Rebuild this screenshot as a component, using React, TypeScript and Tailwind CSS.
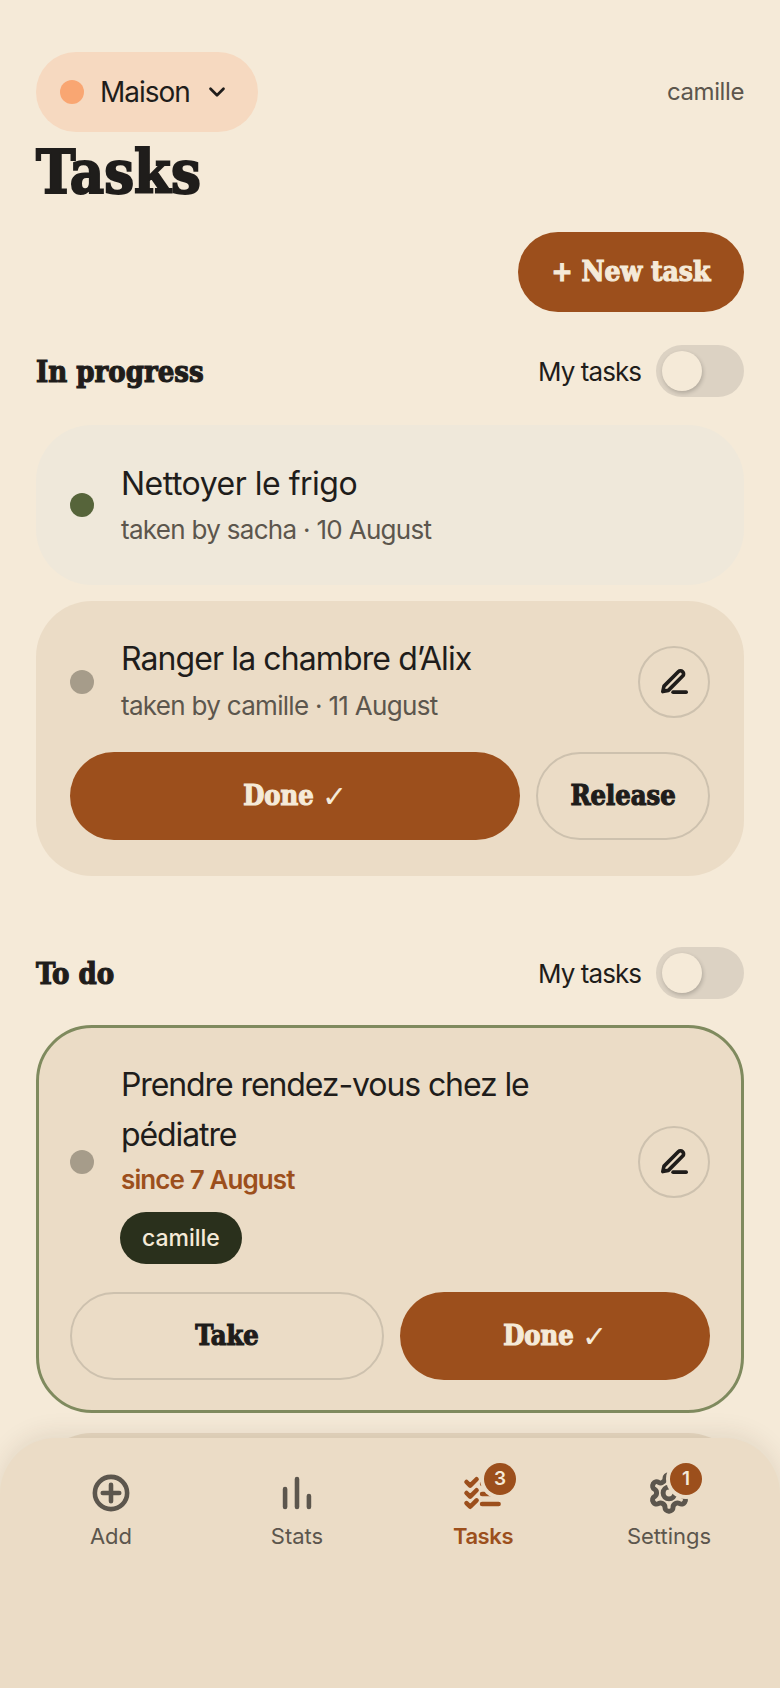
import { ChevronDown } from "lucide-react"

const sans = "font-['Inter','Noto_Sans',sans-serif]"
const serifBase = "font-['DejaVu_Serif','Liberation_Serif',serif] font-bold [font-stretch:condensed]"
const serif = `${serifBase} [-webkit-text-stroke:1.1px_currentColor]`
const serifTitle = `${serifBase} [-webkit-text-stroke:1.9px_currentColor]`

function Toggle() {
  return (
    <div className="flex items-center gap-[15px]">
      <span className="text-[26px] tracking-[-0.95px] text-[#1f1d1b]">My tasks</span>
      <div className="flex h-[52px] w-[88px] items-center rounded-full bg-[#dcd2c3] pl-[6px]">
        <div className="h-[40px] w-[40px] rounded-full bg-[#f5ead8] shadow-[1px_2px_4px_rgba(0,0,0,0.2)]" />
      </div>
    </div>
  )
}

function EditButton() {
  return (
    <div className="flex h-[72px] w-[72px] shrink-0 items-center justify-center rounded-full border-2 border-[#cdc1ae]">
      <svg width="35" height="35" viewBox="0 0 24 24" fill="none" stroke="#1f1d1b" strokeWidth="2.5" strokeLinecap="round" strokeLinejoin="round">
        <path d="M4 18.2l.8-3.7 9.8-9.9a2.1 2.1 0 0 1 3 3l-9.8 9.8z" />
        <path d="M11 18.6h9" />
      </svg>
    </div>
  )
}

function Badge({ n }: { n: number }) {
  return (
    <span className="absolute left-[23px] top-[-8px] flex h-8 w-8 items-center justify-center rounded-full bg-[#9c4f1c] text-[19px] font-semibold text-[#f5ead8] shadow-[0_0_0_4px_#ebdcc6]">
      {n}
    </span>
  )
}

export default function App() {
  return (
    <div className={`${sans} relative h-[1688px] w-[780px] overflow-hidden bg-[#f5ead8]`}>
      <div className="px-9 pt-[52px]">
        <div className="flex items-center justify-between">
          <div className="flex h-[80px] w-[222px] items-center rounded-full bg-[#f6d9c0] pl-6">
            <span className="h-6 w-6 rounded-full bg-[#f9a672]" />
            <span className="ml-4 text-[28px] tracking-[-1px] text-[#1f1d1b]">Maison</span>
            <ChevronDown className="ml-[14px]" size={26} color="#1f1d1b" strokeWidth={2.5} />
          </div>
          <span className="text-[24px] tracking-[-0.4px] text-[#5c564d]">camille</span>
        </div>

        <h1 className={`${serifTitle} mt-[9px] text-[59px] leading-[64px] text-[#1f1d1b]`}>Tasks</h1>

        <div className="mt-[27px] flex justify-end">
          <div className={`${serif} flex h-[80px] w-[226px] items-center justify-center rounded-full bg-[#9c4f1c] text-[28px] text-[#f5ead8]`}>
            + New task
          </div>
        </div>

        <div className="mt-[33px] flex h-[52px] items-center justify-between">
          <h2 className={`${serif} pt-[3px] text-[29px] text-[#1f1d1b]`}>In progress</h2>
          <Toggle />
        </div>

        <div className="mt-7 flex flex-col gap-4">
          <div className="flex h-[160px] items-center rounded-[56px] bg-[#efe8da] px-[34px]">
            <span className="h-6 w-6 shrink-0 rounded-full bg-[#56643a]" />
            <div className="ml-[27px]">
              <div className="text-[32px] leading-[50px] tracking-[-0.5px] text-[#1f1d1b]">Nettoyer le frigo</div>
              <div className="text-[26px] leading-[42px] tracking-[-0.7px] text-[#5c564d]">taken by sacha · 10 August</div>
            </div>
          </div>

          <div className="rounded-[56px] bg-[#ebdcc6] px-[34px] pb-[36px] pt-[33px]">
            <div className="flex items-center">
              <span className="h-6 w-6 shrink-0 rounded-full bg-[#a69c8a]" />
              <div className="ml-[27px] flex-1">
                <div className="text-[32px] leading-[50px] tracking-[-0.9px] text-[#1f1d1b]">Ranger la chambre d’Alix</div>
                <div className="pb-[3px] pt-[1px] text-[26px] leading-[42px] tracking-[-0.7px] text-[#5c564d]">taken by camille · 11 August</div>
              </div>
              <EditButton />
            </div>
            <div className="mt-[22px] flex gap-4">
              <div className={`${serif} flex h-[88px] flex-1 items-center justify-center gap-2 rounded-full bg-[#9c4f1c] text-[27px] text-[#f5ead8]`}>
                Done <span className="text-[30px] font-normal [-webkit-text-stroke:0]">✓</span>
              </div>
              <div className={`${serif} flex h-[88px] w-[174px] items-center justify-center rounded-full border-2 border-[#cdc1ae] text-[27px] text-[#1f1d1b]`}>Release</div>
            </div>
          </div>
        </div>

        <div className="mt-[71px] flex h-[52px] items-center justify-between">
          <h2 className={`${serif} pt-[3px] text-[29px] text-[#1f1d1b]`}>To do</h2>
          <Toggle />
        </div>

        <div className="mt-[26px] rounded-[56px] border-[3px] border-[#7f8a5e] bg-[#ebdcc6] px-[31px] pb-[30px] pt-[32px]">
          <div className="flex items-center">
            <span className="h-6 w-6 shrink-0 rounded-full bg-[#a69c8a]" />
            <div className="ml-[27px] flex-1">
              <div className="text-[32px] leading-[50px] tracking-[-1.1px] text-[#1f1d1b]">Prendre rendez-vous chez le pédiatre</div>
              <div className="mt-[2px] text-[26px] font-semibold leading-[36px] tracking-[-0.9px] text-[#9c4f1c]">since 7 August</div>
              <div className="ml-[-1px] mt-[14px] inline-flex h-[52px] items-center rounded-full bg-[#2a301c] px-[22px] text-[23px] font-medium text-[#f5ead8]">camille</div>
            </div>
            <EditButton />
          </div>
          <div className="mt-[28px] flex gap-4">
            <div className={`${serif} flex h-[88px] min-w-0 flex-1 basis-0 items-center justify-center rounded-full border-2 border-[#cdc1ae] text-[27px] text-[#1f1d1b]`}>Take</div>
            <div className={`${serif} flex h-[88px] min-w-0 flex-1 basis-0 items-center justify-center gap-2 rounded-full bg-[#9c4f1c] text-[27px] text-[#f5ead8]`}>
              Done <span className="text-[30px] font-normal [-webkit-text-stroke:0]">✓</span>
            </div>
          </div>
        </div>

        <div className="mt-5 h-[200px] rounded-[56px] bg-[#e6d7c0]" />
      </div>

      {/* bottom nav lies over the list */}
      <nav className="absolute inset-x-0 bottom-0 grid h-[250px] grid-cols-4 rounded-t-[56px] bg-[#ebdcc6] px-[18px] pt-[33px] shadow-[0_-4px_24px_rgba(60,40,20,0.1)]">
        <div className="flex flex-col items-center text-[#5c564d]">
          <svg width="44" height="44" viewBox="0 0 24 24" fill="none" stroke="currentColor" strokeWidth="2.5" strokeLinecap="round">
            <circle cx="12" cy="12" r="8.8" />
            <path d="M12 7.5v9M7.5 12h9" />
          </svg>
          <span className="mt-[5px] text-[22px]">Add</span>
        </div>
        <div className="flex flex-col items-center text-[#5c564d]">
          <svg width="44" height="44" viewBox="0 0 24 24" fill="none" stroke="currentColor" strokeWidth="2.5" strokeLinecap="round">
            <path d="M12 4.4v15.2M5.5 9.8v9.8M18.5 13.6v6" />
          </svg>
          <span className="mt-[5px] text-[22px]">Stats</span>
        </div>
        <div className="flex flex-col items-center text-[#9c4f1c]">
          <div className="relative h-[44px] w-[44px]">
            <svg width="44" height="44" viewBox="0 0 24 24" fill="none" stroke="currentColor" strokeWidth="2.5" strokeLinecap="round" strokeLinejoin="round">
              <path d="M3 6l2 2 3.5-3.5M3 12l2 2 3.5-3.5M3 17.5l2 2 3.5-3.5M11.5 18h9M11.5 12.5h9M11.5 7h9" />
            </svg>
            <Badge n={3} />
          </div>
          <span className="mt-[5px] text-[22px] font-semibold tracking-[-0.4px]">Tasks</span>
        </div>
        <div className="flex flex-col items-center text-[#5c564d]">
          <div className="relative h-[44px] w-[44px]">
            <svg width="44" height="44" viewBox="0 0 24 24" fill="none" stroke="currentColor" strokeWidth="2.7" strokeLinecap="round" strokeLinejoin="round">
              <path d="M12.2 2h-.4a2 2 0 0 0-2 2v.2a2 2 0 0 1-1 1.7l-.4.3a2 2 0 0 1-2 0l-.2-.1a2 2 0 0 0-2.7.7l-.2.4a2 2 0 0 0 .7 2.7l.2.1a2 2 0 0 1 1 1.7v.5a2 2 0 0 1-1 1.7l-.2.1a2 2 0 0 0-.7 2.7l.2.4a2 2 0 0 0 2.7.7l.2-.1a2 2 0 0 1 2 0l.4.3a2 2 0 0 1 1 1.7v.2a2 2 0 0 0 2 2h.4a2 2 0 0 0 2-2v-.2a2 2 0 0 1 1-1.7l.4-.3a2 2 0 0 1 2 0l.2.1a2 2 0 0 0 2.7-.7l.2-.4a2 2 0 0 0-.7-2.7l-.2-.1a2 2 0 0 1-1-1.7v-.5a2 2 0 0 1 1-1.7l.2-.1a2 2 0 0 0 .7-2.7l-.2-.4a2 2 0 0 0-2.7-.7l-.2.1a2 2 0 0 1-2 0l-.4-.3a2 2 0 0 1-1-1.7V4a2 2 0 0 0-2-2z" />
              <circle cx="12" cy="12" r="3.2" />
            </svg>
            <Badge n={1} />
          </div>
          <span className="mt-[5px] text-[22px]">Settings</span>
        </div>
      </nav>
    </div>
  )
}
